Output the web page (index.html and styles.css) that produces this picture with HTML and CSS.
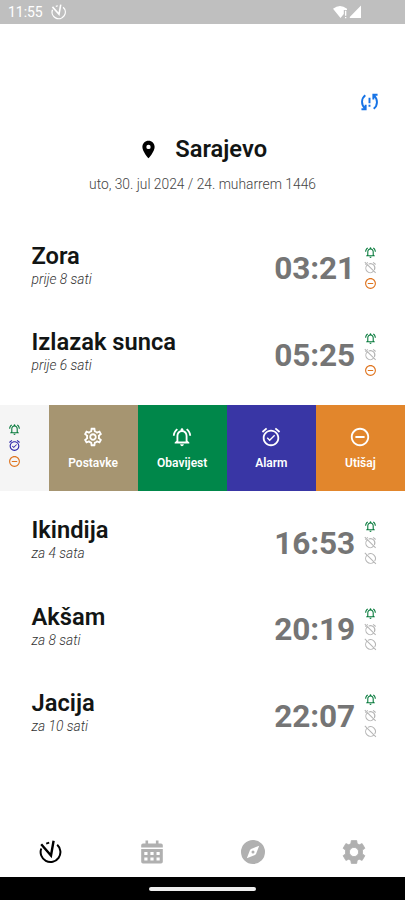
FILE: index.html
```
<!DOCTYPE html>
<html lang="bs">
<head>
<meta charset="utf-8">
<title>Sarajevo</title>
<link rel="stylesheet" href="styles.css">
</head>
<body>
<svg class="sprite" xmlns="http://www.w3.org/2000/svg">
  <symbol id="bell" viewBox="0 0 24 24"><path d="M12 22c1.1 0 2-.9 2-2h-4c0 1.1.9 2 2 2zm6-6v-5c0-3.07-1.63-5.64-4.5-6.32V4c0-.83-.67-1.5-1.5-1.5s-1.5.67-1.5 1.5v.68C7.64 5.36 6 7.92 6 11v5l-2 2v1h16v-1l-2-2zm-2 1H8v-6c0-2.48 1.51-4.5 4-4.5s4 2.02 4 4.5v6zM7.58 4.08L6.15 2.65C3.75 4.48 2.17 7.3 2.03 10.5h2c.15-2.65 1.51-4.97 3.55-6.42zm12.39 6.42h2c-.15-3.2-1.73-6.02-4.12-7.85l-1.42 1.43c2.02 1.45 3.39 3.77 3.54 6.42z"/></symbol>
  <symbol id="alarm-on" viewBox="0 0 24 24"><path d="M22 5.72l-4.6-3.86-1.29 1.53 4.6 3.86L22 5.72zM7.88 3.39L6.6 1.86 2 5.71l1.29 1.53 4.59-3.85zM12 4c-4.97 0-9 4.03-9 9s4.02 9 9 9c4.97 0 9-4.03 9-9s-4.03-9-9-9zm0 16c-3.87 0-7-3.13-7-7s3.13-7 7-7 7 3.13 7 7-3.13 7-7 7zm-1.46-5.47L8.41 12.4l-1.06 1.06 3.18 3.18 6-6-1.06-1.06-4.93 4.95z"/></symbol>
  <symbol id="alarm-off" viewBox="0 0 24 24"><path fill="none" stroke="currentColor" stroke-width="1.9" d="M1.5 2L21.5 22M8.5 5.8A8 8 0 0 1 19.2 16.5M17.2 19.2A8 8 0 0 1 5.8 7.8M16.8 2.6l4.7 3.9M7 2.6l-1.5 1.2M3.8 5.3L2.5 6.5"/></symbol>
  <symbol id="mute" viewBox="0 0 24 24"><path d="M7 11v2h10v-2H7zm5-9C6.48 2 2 6.48 2 12s4.48 10 10 10 10-4.48 10-10S17.52 2 12 2zm0 18c-4.41 0-8-3.59-8-8s3.59-8 8-8 8 3.59 8 8-3.59 8-8 8z"/></symbol>
  <symbol id="mute-off" viewBox="0 0 24 24"><path fill="none" stroke="currentColor" stroke-width="1.9" d="M1.5 1.5L22 22M7.3 4.3A9 9 0 0 1 19.7 16.7M18 18.7A9 9 0 0 1 5.3 6"/></symbol>
  <symbol id="gear" viewBox="0 0 24 24"><path d="M19.43 12.98c.04-.32.07-.64.07-.98 0-.34-.03-.66-.07-.98l2.11-1.65c.19-.15.24-.42.12-.64l-2-3.46c-.09-.16-.26-.25-.44-.25-.06 0-.12.01-.17.03l-2.49 1c-.52-.4-1.08-.73-1.69-.98l-.38-2.65C14.46 2.18 14.25 2 14 2h-4c-.25 0-.46.18-.49.42l-.38 2.65c-.61.25-1.17.59-1.69.98l-2.49-1c-.06-.02-.12-.03-.18-.03-.17 0-.34.09-.43.25l-2 3.46c-.13.22-.07.49.12.64l2.11 1.65c-.04.32-.07.65-.07.98 0 .33.03.66.07.98l-2.11 1.65c-.19.15-.24.42-.12.64l2 3.46c.09.16.26.25.44.25.06 0 .12-.01.17-.03l2.49-1c.52.4 1.08.73 1.69.98l.38 2.65c.03.24.24.42.49.42h4c.25 0 .46-.18.49-.42l.38-2.65c.61-.25 1.17-.59 1.69-.98l2.49 1c.06.02.12.03.18.03.17 0 .34-.09.43-.25l2-3.46c.12-.22.07-.49-.12-.64l-2.11-1.65zm-1.98-1.71c.04.31.05.52.05.73 0 .21-.02.43-.05.73l-.14 1.13.89.7 1.08.84-.7 1.21-1.27-.51-1.04-.42-.9.68c-.43.32-.84.56-1.25.73l-1.06.43-.16 1.13-.2 1.35h-1.4l-.19-1.35-.16-1.13-1.06-.43c-.43-.18-.83-.41-1.23-.71l-.91-.7-1.06.43-1.27.51-.7-1.21 1.08-.84.89-.7-.14-1.13c-.03-.31-.05-.54-.05-.74s.02-.43.05-.73l.14-1.13-.89-.7-1.08-.84.7-1.21 1.27.51 1.04.42.9-.68c.43-.32.84-.56 1.25-.73l1.06-.43.16-1.13.2-1.35h1.39l.19 1.35.16 1.13 1.06.43c.43.18.83.41 1.23.71l.91.7 1.06-.43 1.27-.51.7 1.21-1.07.85-.89.7.14 1.13zM12 8c-2.21 0-4 1.79-4 4s1.79 4 4 4 4-1.79 4-4-1.79-4-4-4zm0 6c-1.1 0-2-.9-2-2s.9-2 2-2 2 .9 2 2-.9 2-2 2z"/></symbol>
  <symbol id="gear-solid" viewBox="0 0 24 24"><path fill-rule="evenodd" stroke="currentColor" stroke-width=".8" stroke-linejoin="round" d="M9.3 .6h5.4l.5 3 2 1.2 2.9-1.2 2.8 4.7-2.4 1.8v3.8l2.4 1.8-2.8 4.7-2.9-1.2-2 1.2-.5 3H9.3l-.5-3-2-1.2-2.9 1.2-2.8-4.7 2.4-1.8v-3.8L1.1 8.3l2.8-4.7 2.9 1.2 2-1.2zM12 7.4a4.6 4.6 0 1 0 0 9.2 4.6 4.6 0 0 0 0-9.2z"/></symbol>
  <symbol id="clock" viewBox="0 0 24 24"><path fill="none" stroke="currentColor" stroke-width="2" d="M2.3 8.5A9.9 9.9 0 1 0 18.2 4.8"/><path fill="none" stroke="currentColor" stroke-width="2.4" d="M2.2 4.3L12 15.5 14.6 .8"/><path fill="none" stroke="currentColor" stroke-width="1.8" d="M7.2 3.6l3-.9"/></symbol>
  <symbol id="pin" viewBox="0 0 24 24"><path d="M12 2C8.13 2 5 5.13 5 9c0 5.25 7 13 7 13s7-7.75 7-13c0-3.87-3.13-7-7-7zm0 9.5a2.5 2.5 0 1 1 0-5 2.5 2.5 0 0 1 0 5z"/></symbol>
  <symbol id="sync" viewBox="0 0 24 24"><g fill="none" stroke="currentColor" stroke-width="2.2"><path d="M7.2 4.2C2.3 8 2.3 15.5 6.8 19.2M2.8 20.2H7.6V15"/><path d="M16.8 19.8C21.7 16 21.7 8.5 17.2 4.8M21.2 3.8H16.4V9"/><path d="M12 7v6.5M12 15.2v2.2"/></g></symbol>
  <symbol id="calendar" viewBox="0 0 24 24"><path fill-rule="evenodd" d="M5.5 .5h2.6v2.9h7.8V.5h2.6v2.9H21a1.8 1.8 0 0 1 1.8 1.8v2.3H1.2V5.2A1.8 1.8 0 0 1 3 3.4h2.5zM1.2 9.1h21.6v12.6A1.8 1.8 0 0 1 21 23.5H3a1.8 1.8 0 0 1-1.8-1.8zM4.3 11.9v3h3.2v-3zm6.1 0v3h3.2v-3zm6.1 0v3h3.2v-3zM4.3 17.5v3h3.2v-3zm6.1 0v3h3.2v-3zm6.1 0v3h3.2v-3z"/></symbol>
  <symbol id="compass" viewBox="0 0 24 24"><path fill-rule="evenodd" d="M12 0a12 12 0 1 0 0 24 12 12 0 0 0 0-24zM18.2 5.8l-3.2 8.2-1 1-8.2 3.2 3.2-8.2 1-1zM12 10.5a1.5 1.5 0 1 0 0 3 1.5 1.5 0 0 0 0-3z"/></symbol>
</svg>

<div class="phone">
  <header class="status">
    <span class="time">11:55</span>
    <svg class="status-clock"><use href="#clock"/></svg>
    <svg class="signal" viewBox="0 0 30 14"><path d="M0 3.8Q7-2 14 3.8V5h-3.2v4L7.5 13zM16.8 13V12L28 .6V13z"/><path d="M12 5.8h1.3v5H12zM12 12h1.3v1.3H12z"/></svg>
  </header>

  <main class="main">
    <div class="toolbar"><svg class="sync"><use href="#sync"/></svg></div>
    <div class="place"><svg class="pin"><use href="#pin"/></svg><h1>Sarajevo</h1></div>
    <p class="date">uto, 30. jul 2024 / 24. muharrem 1446</p>

    <section class="times">
      <article class="row"><div class="label"><h2>Zora</h2><p>prije 8 sati</p></div><span class="hour">03:21</span>
        <div class="marks"><svg class="green"><use href="#bell"/></svg><svg class="off"><use href="#alarm-off"/></svg><svg class="orange"><use href="#mute"/></svg></div></article>
      <article class="row"><div class="label"><h2>Izlazak sunca</h2><p>prije 6 sati</p></div><span class="hour">05:25</span>
        <div class="marks"><svg class="green"><use href="#bell"/></svg><svg class="off"><use href="#alarm-off"/></svg><svg class="orange"><use href="#mute"/></svg></div></article>
      <article class="swipe">
        <div class="peek"><div class="marks"><svg class="green"><use href="#bell"/></svg><svg class="blue"><use href="#alarm-on"/></svg><svg class="orange"><use href="#mute"/></svg></div></div>
        <div class="action settings"><svg><use href="#gear"/></svg><span>Postavke</span></div>
        <div class="action notify"><svg><use href="#bell"/></svg><span>Obavijest</span></div>
        <div class="action alarm"><svg><use href="#alarm-on"/></svg><span>Alarm</span></div>
        <div class="action silence"><svg><use href="#mute"/></svg><span>Utišaj</span></div>
      </article>
      <article class="row"><div class="label"><h2>Ikindija</h2><p>za 4 sata</p></div><span class="hour">16:53</span>
        <div class="marks"><svg class="green"><use href="#bell"/></svg><svg class="off"><use href="#alarm-off"/></svg><svg class="off"><use href="#mute-off"/></svg></div></article>
      <article class="row"><div class="label"><h2>Akšam</h2><p>za 8 sati</p></div><span class="hour">20:19</span>
        <div class="marks"><svg class="green"><use href="#bell"/></svg><svg class="off"><use href="#alarm-off"/></svg><svg class="off"><use href="#mute-off"/></svg></div></article>
      <article class="row"><div class="label"><h2>Jacija</h2><p>za 10 sati</p></div><span class="hour">22:07</span>
        <div class="marks"><svg class="green"><use href="#bell"/></svg><svg class="off"><use href="#alarm-off"/></svg><svg class="off"><use href="#mute-off"/></svg></div></article>
    </section>
  </main>

  <nav class="tabs">
    <svg class="active"><use href="#clock"/></svg>
    <svg><use href="#calendar"/></svg>
    <svg><use href="#compass"/></svg>
    <svg><use href="#gear-solid"/></svg>
  </nav>
  <footer class="home"><span></span></footer>
</div>
</body>
</html>
```
FILE: styles.css
```
* { box-sizing: border-box; margin: 0; padding: 0; }
body { font-family: Roboto, sans-serif; background: #fff; color: #121514; overflow: hidden; }
svg { display: block; fill: currentColor; flex: none; }
.sprite { position: absolute; width: 0; height: 0; }
.phone { width: 405px; height: 900px; display: flex; flex-direction: column; }
.status { height: 24px; background: #bfbfbf; color: #fff; display: flex; align-items: center; padding: 0 42px 0 8px; }
.time { font-size: 14px; line-height: 24px; letter-spacing: -.05px; }
.status-clock { width: 16px; height: 16px; margin-left: 8px; }
.signal { width: 30px; height: 14px; margin-left: auto; }
.main { flex: 1; }
.toolbar { display: flex; justify-content: flex-end; padding: 67px 25px 0 0; }
.sync { width: 21px; height: 22px; color: #1673e6; }
.place { display: flex; align-items: center; height: 36px; margin-top: 18px; padding-left: 138px; }
.pin { width: 21px; height: 21px; color: #000; }
.place h1 { font-size: 23.7px; font-weight: 600; line-height: 36px; margin-left: 16.3px; }
.date { text-align: center; font-size: 13.8px; font-weight: 300; line-height: 20px; margin-top: 7px; color: #444; }
.times { padding-top: 30.7px; }
.row { height: 86.6px; display: flex; align-items: center; padding: 0 28px 0 31.5px; }
.label { flex: 1; padding-bottom: 6.8px; }
.label h2 { font-size: 23.7px; font-weight: 600; line-height: 28px; }
.label p { font-size: 13.8px; font-style: italic; font-weight: 300; line-height: 18px; color: #333; }
.hour { font-size: 31.6px; font-weight: 700; line-height: 38px; letter-spacing: -.15px; color: #757575; margin-top: 2.2px; }
.marks { display: flex; flex-direction: column; gap: 2.7px; margin: 0 0 .4px 9px; }
.marks svg { width: 13px; height: 13px; }
.green { color: #087b3d; }
.off { color: #b4b4b4; }
.orange { color: #df741e; }
.blue { color: #2c27aa; }
.swipe { display: flex; height: 86px; margin: 6.8px 0 8.7px; }
.peek { width: 48.5px; background: #f5f5f5; display: flex; align-items: center; padding: 0 0 4px 7.5px; }
.peek .marks { margin: 0; }
.action { flex: 1; display: flex; flex-direction: column; align-items: center; color: #fff; padding-top: 21px; }
.action svg { width: 22px; height: 22px; }
.action span { font-size: 12px; font-weight: 600; line-height: 16px; margin-top: 7px; }
.settings { background: #a69571; }
.notify { background: #00874a; }
.alarm { background: #3936a5; }
.silence { background: #e2862c; }
.tabs { height: 52px; display: flex; justify-content: space-around; color: #b0b0b0; }
.tabs svg { width: 24px; height: 24px; margin-top: 15px; }
.tabs .active { color: #000; }
.home { height: 23px; background: #000; display: flex; justify-content: center; align-items: center; }
.home span { width: 107px; height: 4px; border-radius: 2px; background: #eee; }
```
